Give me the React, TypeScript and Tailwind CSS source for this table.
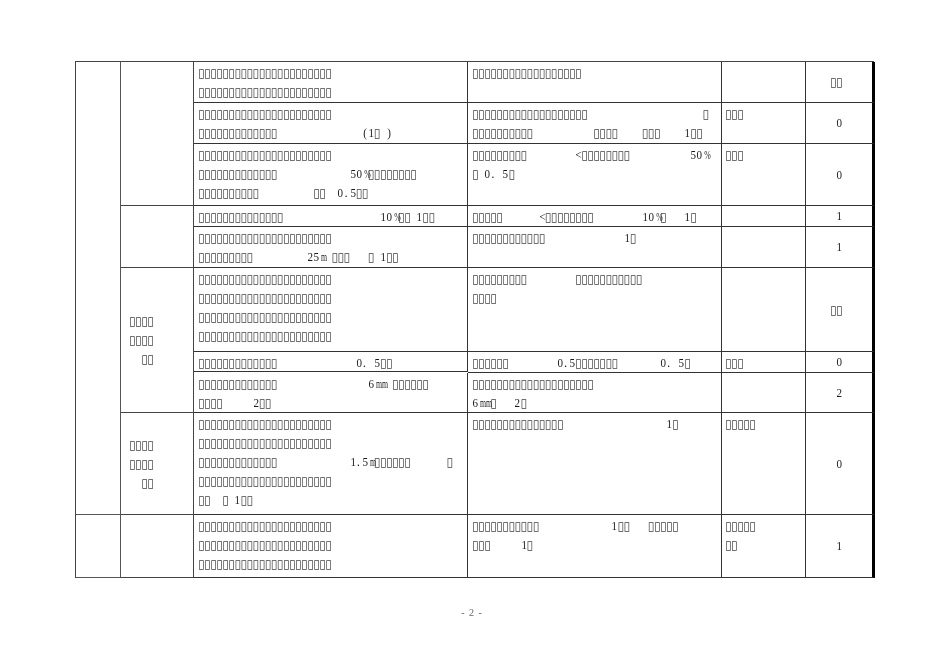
const T = (n: number) => '▯'.repeat(n);
const S = (n: number) => ' '.repeat(n);

const rowHeights = ['h-[41px]', 'h-[41px]', 'h-[62px]', 'h-[21px]', 'h-[41px]', 'h-[84px]', 'h-[20px]', 'h-[40px]', 'h-[102px]', 'h-[63px]'];

const col3: string[][] = [
  [T(22), T(22)],
  [T(22), T(13) + S(14) + '(1' + T(1) + ' )'],
  [T(22), T(13) + S(12) + '50%' + T(8), T(10) + S(9) + T(2) + S(2) + '0.5' + T(2)],
  [T(14) + S(16) + '10%' + T(2) + ' 1' + T(2)],
  [T(22), T(9) + S(9) + '25m ' + T(3) + S(3) + T(1) + ' 1' + T(2)],
  [T(22), T(22), T(22), T(22)],
  [T(13) + S(13) + '0. 5' + T(2)],
  [T(13) + S(15) + '6mm ' + T(6), T(4) + S(5) + '2' + T(2)],
  [T(22), T(22), T(13) + S(12) + '1.5m' + T(6) + S(6) + T(1), T(22), T(2) + S(2) + T(1) + ' 1' + T(2)],
  [T(22), T(22), T(22)],
];

const col4: string[][] = [
  [T(18)],
  [T(19) + S(19) + T(1), T(10) + S(10) + T(4) + S(4) + T(3) + S(4) + '1' + T(2)],
  [T(9) + S(8) + '<' + T(8) + S(10) + '50%', T(1) + ' 0. 5' + T(1)],
  [T(5) + S(6) + '<' + T(8) + S(8) + '10%' + T(1) + S(3) + '1' + T(1)],
  [T(12) + S(13) + '1' + T(1)],
  [T(9) + S(8) + T(11), T(4)],
  [T(6) + S(8) + '0.5' + T(7) + S(7) + '0. 5' + T(1)],
  [T(20), '6mm' + T(1) + S(3) + '2' + T(1)],
  [T(15) + S(17) + '1' + T(1)],
  [T(11) + S(12) + '1' + T(2) + S(3) + T(5), T(3) + S(5) + '1' + T(1)],
];

const col5: string[][] = [[], [T(3)], [T(3)], [], [], [], [T(3)], [], [T(5)], [T(5), T(2)]];

const col6 = [T(2) + ' ', '0', '0', '1', '1', T(2) + ' ', '0', '2', '0', '1'];

const side = ['▯▯▯▯', '▯▯▯▯', '  ▯▯'];

// one fixed-width slot per character, like the PDF's glyph grid
function Ch({ c }: { c: string }) {
  if (c === '▯') {
    return (
      <span className="inline-block w-[6.07px] shrink-0 text-center font-['DejaVu_Sans'] text-[12px] leading-none text-[#444]">
        ▯
      </span>
    );
  }
  if (c === '.') {
    return <span className="inline-block w-[6.07px] shrink-0 text-left pl-[1px]">.</span>;
  }
  if (c === 'm' || c === '%') {
    return (
      <span className="inline-block w-[6.07px] shrink-0 text-center">
        <span className="inline-block scale-x-[0.6]">{c}</span>
      </span>
    );
  }
  return (
    <span className="inline-block w-[6.07px] shrink-0 text-center whitespace-pre">
      <span className="inline-block scale-x-[0.85]">{c}</span>
    </span>
  );
}

function Line({ text }: { text: string }) {
  return (
    <div className="flex h-[19px] items-center whitespace-pre">
      {Array.from(text).map((c, i) => (
        <Ch key={i} c={c} />
      ))}
    </div>
  );
}

function TextCell({ lines, pad, extra = '' }: { lines: string[]; pad: string; extra?: string }) {
  return (
    <div className={`border-r border-b border-[#333] pt-[1px] ${pad} ${extra}`}>
      {lines.map((l, i) => (
        <Line key={i} text={l} />
      ))}
    </div>
  );
}

export default function App() {
  return (
    <div className="w-[950px] h-[672px] bg-white font-['Liberation_Serif'] text-[13px] text-[#1a1a1a] grayscale">
      <div className="pt-[61px] pl-[75px]">
        <div className="grid w-[799px] grid-cols-[45px_73px_274px_254px_84px_69px] border-l border-t border-[#444]">
          {rowHeights.map((h, r) => (
            <div key={r} className="contents">
              {r === 0 && <div className="row-span-9 border-r border-b border-[#555]" />}
              {r === 9 && <div className={`${h} border-r border-b border-[#555]`} />}
              {r === 0 && <div className="row-span-3 border-r border-b border-[#444]" />}
              {r === 3 && <div className="row-span-2 border-r border-b border-[#444]" />}
              {r === 5 && (
                <div className="row-span-3 flex flex-col justify-center border-r border-b border-[#444] pl-[8px]">
                  {side.map((l, i) => (
                    <Line key={i} text={l} />
                  ))}
                </div>
              )}
              {r === 8 && (
                <div className="flex flex-col justify-center border-r border-b border-[#444] pl-[8px]">
                  {side.map((l, i) => (
                    <Line key={i} text={l} />
                  ))}
                </div>
              )}
              {r === 9 && <div className="border-r border-b border-[#444]" />}
              <TextCell lines={col3[r]} pad="pl-[4px]" extra={h} />
              <TextCell lines={col4[r]} pad="pl-[4px]" />
              <TextCell lines={col5[r]} pad="pl-[3px]" />
              <div className="flex items-center justify-center border-r-[3px] border-b border-r-black border-b-[#333]">
                <Line text={col6[r]} />
              </div>
            </div>
          ))}
        </div>
      </div>
      <div className="mt-[27px] flex justify-center pr-[6px] text-[10px] tracking-[1px] text-[#666]">- 2 -</div>
    </div>
  );
}
